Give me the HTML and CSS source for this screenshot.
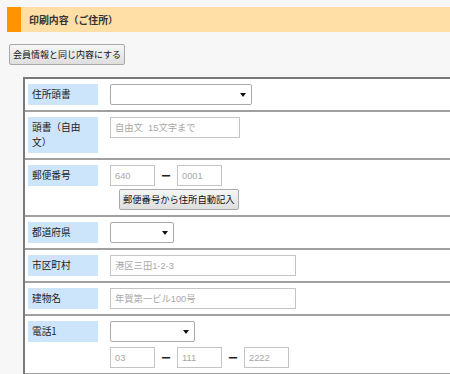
FILE: index.html
```html
<!DOCTYPE html>
<html lang="ja">
<head>
<meta charset="utf-8">
<title>印刷内容（ご住所）</title>
<link rel="stylesheet" href="styles.css">
</head>
<body>
<div class="heading"><span class="heading-mark"></span><span class="heading-text">印刷内容（ご住所）</span></div>
<button class="btn copy-btn" type="button">会員情報と同じ内容にする</button>
<div class="form-table">
  <div class="row">
    <div class="label">住所頭書</div>
    <div class="field">
      <span class="select-wrap w142"><select class="select"><option></option></select></span>
    </div>
  </div>
  <div class="row">
    <div class="label">頭書（自由文）</div>
    <div class="field">
      <input class="text w130" type="text" placeholder="自由文&nbsp;&nbsp;15文字まで">
    </div>
  </div>
  <div class="row">
    <div class="label">郵便番号</div>
    <div class="field">
      <div class="line">
        <input class="text w45" type="text" placeholder="640"><span class="dash">ー</span><input class="text w45" type="text" placeholder="0001">
      </div>
      <button class="btn zip-btn" type="button">郵便番号から住所自動記入</button>
    </div>
  </div>
  <div class="row">
    <div class="label">都道府県</div>
    <div class="field">
      <span class="select-wrap w64"><select class="select"><option></option></select></span>
    </div>
  </div>
  <div class="row">
    <div class="label">市区町村</div>
    <div class="field">
      <input class="text w186" type="text" placeholder="港区三田1-2-3">
    </div>
  </div>
  <div class="row">
    <div class="label">建物名</div>
    <div class="field">
      <input class="text w186" type="text" placeholder="年賀第一ビル100号">
    </div>
  </div>
  <div class="row">
    <div class="label">電話1</div>
    <div class="field phone">
      <span class="select-wrap w85"><select class="select"><option></option></select></span>
      <div class="line">
        <input class="text w45" type="text" placeholder="03"><span class="dash">ー</span><input class="text w45" type="text" placeholder="111"><span class="dash">ー</span><input class="text w45" type="text" placeholder="2222">
      </div>
    </div>
  </div>
</div>
</body>
</html>
```
FILE: styles.css
```css
html, body {
  margin: 0;
  padding: 0;
}
body {
  width: 450px;
  height: 374px;
  overflow: hidden;
  background: #f7f7f7;
  font-family: "Liberation Sans", "Noto Sans CJK JP", sans-serif;
  color: #222;
}
.heading {
  margin: 7px 0 0 7px;
  height: 25px;
  display: flex;
  align-items: stretch;
  background: #ffdfa6;
}
.heading-mark {
  width: 14px;
  background: #ff9400;
}
.heading-text {
  display: flex;
  align-items: center;
  margin-left: 8px;
  font-family: "Noto Sans CJK JP", sans-serif;
  font-weight: bold;
  font-size: 9.9px;
  color: #333;
}
.btn {
  display: block;
  box-sizing: border-box;
  height: 21px;
  padding: 0 3px;
  border: 1px solid #a9a9a9;
  border-radius: 2px;
  background: linear-gradient(#f6f6f6, #dedede);
  font-family: "Noto Sans CJK JP", sans-serif;
  font-size: 9px;
  color: #111;
  line-height: 19px;
  white-space: nowrap;
}
.copy-btn {
  margin: 12px 0 0 9px;
}
.form-table {
  margin: 12px 0 0 23px;
  width: 440px;
  border-left: 2px solid #7a7a7a;
  border-top: 2px solid #7a7a7a;
  background: #fff;
}
.row {
  display: flex;
  align-items: flex-start;
  padding: 5px 0 5px 3px;
  border-bottom: 2px solid #a0a0a0;
}
.label {
  box-sizing: border-box;
  width: 70px;
  padding: 3px 4px;
  line-height: 15px;
  font-family: "Noto Sans CJK JP", sans-serif;
  font-size: 9.7px;
  background: #cde5fb;
  color: #222;
}
.field {
  margin-left: 12px;
  display: flex;
  flex-direction: column;
  align-items: flex-start;
  gap: 3px;
}
.phone {
  gap: 5px;
}
.line {
  display: flex;
  align-items: center;
}
.text {
  box-sizing: border-box;
  height: 21px;
  margin: 0;
  padding: 0 4px;
  border: 1px solid #c4c4c4;
  background: #fff;
  font-family: "Liberation Sans", "Noto Sans CJK JP", sans-serif;
  font-size: 9.3px;
  outline: none;
}
.text::placeholder {
  color: #a8a8a8;
}
.dash {
  width: 22px;
  text-align: center;
  font-family: "Noto Sans CJK JP", sans-serif;
  font-size: 10px;
  font-weight: bold;
  color: #222;
}
.zip-btn {
  margin-left: 9px;
  font-size: 9.3px;
}
.select-wrap {
  position: relative;
  display: block;
  height: 21px;
}
.select-wrap::after {
  content: "";
  position: absolute;
  right: 6px;
  top: 9px;
  border-left: 3px solid transparent;
  border-right: 3px solid transparent;
  border-top: 4px solid #111;
  pointer-events: none;
}
.select {
  appearance: none;
  -webkit-appearance: none;
  box-sizing: border-box;
  width: 100%;
  height: 21px;
  margin: 0;
  border: 1px solid #aaa;
  border-radius: 2px;
  background: #fff;
  outline: none;
}
.w142 { width: 142px; }
.w64 { width: 64px; }
.w85 { width: 85px; }
.w130 { width: 130px; }
.w186 { width: 186px; }
.w45 { width: 45px; }
```
